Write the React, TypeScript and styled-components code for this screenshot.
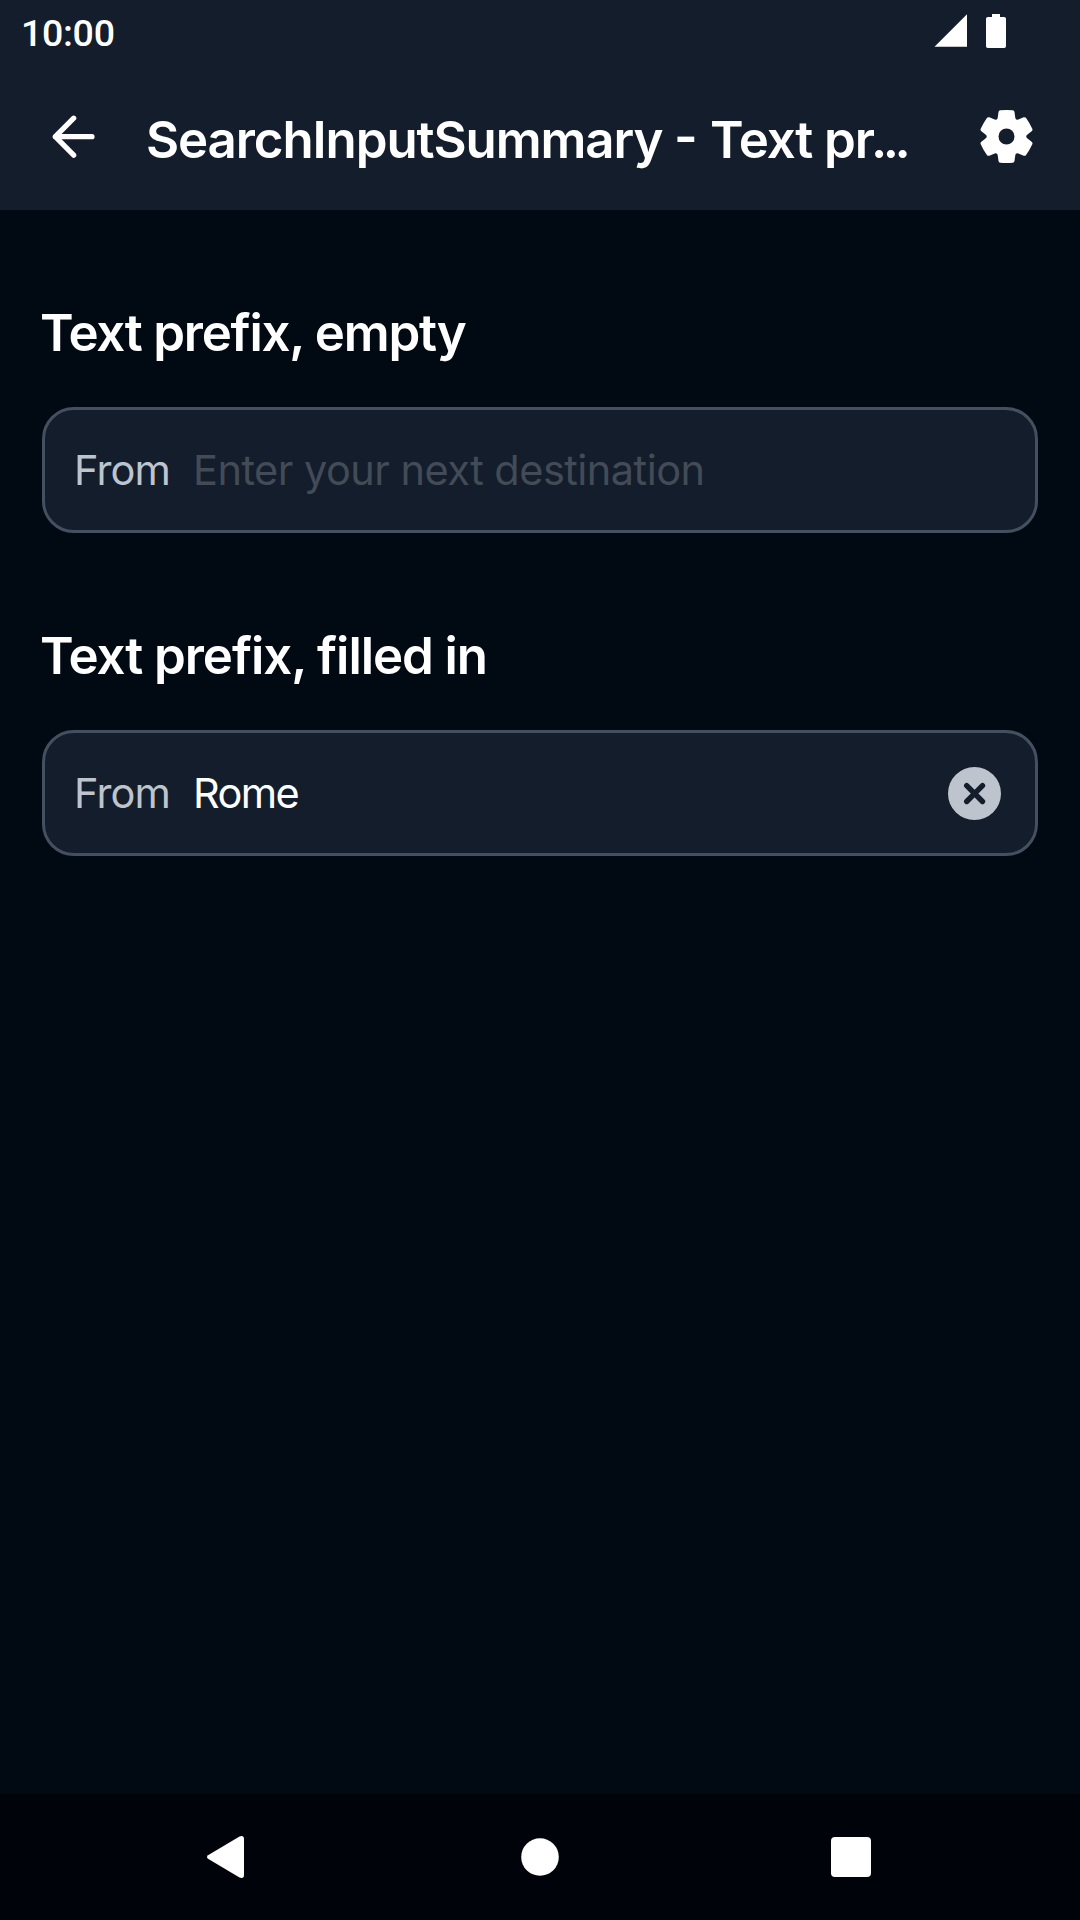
import React from 'react';
import styled, { createGlobalStyle } from 'styled-components';

const color = {
  canvas: '#010913',
  surface: '#141D2B',
  line: '#44505F',
  text: '#FFFFFF',
  secondary: '#BDC4CD',
  disabled: '#424B56',
  nav: '#01030A',
};

const GlobalStyle = createGlobalStyle`
  * { box-sizing: border-box; }
  body { margin: 0; background: ${color.canvas}; }
`;

const Screen = styled.div`
  width: 1080px;
  height: 1920px;
  display: flex;
  flex-direction: column;
  overflow: hidden;
  background: ${color.canvas};
  color: ${color.text};
  font-family: Inter, 'Liberation Sans', sans-serif;
`;

const StatusBar = styled.div`
  height: 63px;
  flex: none;
  display: flex;
  justify-content: space-between;
  align-items: flex-start;
  padding: 0 74px 0 21px;
  background: ${color.surface};
`;

const Clock = styled.time`
  padding-top: 11px;
  font: 500 37.5px/44px Roboto, sans-serif;
  letter-spacing: -0.3px;
`;

const StatusIcons = styled.div`
  display: flex;
  gap: 19px;
  padding-top: 14px;
`;

const AppBar = styled.header`
  height: 147px;
  flex: none;
  display: flex;
  align-items: center;
  padding: 0 46px 0 52px;
  background: ${color.surface};
`;

const IconButton = styled.button`
  display: flex;
  flex: none;
  padding: 0;
  border: 0;
  background: none;
  color: inherit;
`;

const Title = styled.h1`
  flex: 1;
  margin: 0;
  padding: 6px 0 0 50px;
  font-size: 51px;
  line-height: 64px;
  font-weight: 600;
  letter-spacing: -1.1px;
  white-space: nowrap;
`;

const Dash = styled.span`
  font-feature-settings: 'case';
  letter-spacing: 0.5px;
`;

const Dots = styled.span`
  letter-spacing: -4.4px;
  margin-left: -3px;
`;

const Content = styled.main`
  flex: 1;
  padding: 91px 42px 0;
`;

const Section = styled.section`
  height: 323px;
`;

const Heading = styled.h2<{ $spacing: number }>`
  margin: 0 0 42px -2px;
  font-size: 51px;
  line-height: 64px;
  font-weight: 600;
  letter-spacing: ${(p) => p.$spacing}px;
  white-space: nowrap;
`;

const SearchBox = styled.div`
  height: 126px;
  display: flex;
  align-items: center;
  padding: 0 34px 0 29px;
  border: 3px solid ${color.line};
  border-radius: 32px;
  background: ${color.surface};
  font-size: 41.5px;
  line-height: 56px;
  white-space: nowrap;
`;

const Prefix = styled.span`
  width: 119px;
  color: ${color.secondary};
  letter-spacing: -0.9px;
`;

const Value = styled.span<{ $empty?: boolean }>`
  flex: 1;
  color: ${(p) => (p.$empty ? color.disabled : color.text)};
  letter-spacing: ${(p) => (p.$empty ? -0.53 : -1.6)}px;
`;

const NavBar = styled.nav`
  height: 126px;
  flex: none;
  display: grid;
  grid-template-columns: 315px 310px 40px;
  align-items: center;
  padding-left: 206px;
  background: ${color.nav};
`;

const TOOTH =
  'Q-8.72 -17.7 -8.6 -20 L-8 -24.4 Q-7.8 -26 -6.2 -26.2 Q0 -26.8 6.2 -26.2 Q7.8 -26 8 -24.4 L8.6 -20 Q8.72 -17.7 9.85 -17.06';

// Rotates one tooth outline around the hub to form the whole gear.
function gearPath() {
  let d = 'M-9.85 -17.06';
  for (let i = 0; i < 6; i++) {
    const a = (i * Math.PI) / 3;
    d += TOOTH.replace(/(-?[\d.]+) (-?[\d.]+)/g, (_, xs, ys) => {
      const x = Number(xs);
      const y = Number(ys);
      return `${(x * Math.cos(a) - y * Math.sin(a)).toFixed(2)} ${(x * Math.sin(a) + y * Math.cos(a)).toFixed(2)}`;
    });
  }
  return d + 'Z M8 0 A8 8 0 1 0 -8 0 A8 8 0 1 0 8 0Z';
}

const SignalIcon = () => (
  <svg width="33" height="33" viewBox="0 0 33 33">
    <path d="M0.5 32.8H33V0.3Z" fill="#fff" />
  </svg>
);

const BatteryIcon = () => (
  <svg width="20" height="34" viewBox="0 0 20 34">
    <path d="M6 0h8v3h4.2q1.8 0 1.8 1.8v27.4q0 1.8-1.8 1.8H1.8Q0 34 0 32.2V4.8Q0 3 1.8 3H6Z" fill="#fff" />
  </svg>
);

const BackIcon = () => (
  <svg width="44" height="44" viewBox="0 0 44 44" fill="none" stroke="#fff" strokeWidth="5.2" strokeLinecap="round" strokeLinejoin="round">
    <path d="M40 21.7H3.3M21.7 3.2L3.3 21.7L21.7 40.2" />
  </svg>
);

const SettingsIcon = () => (
  <svg width="54" height="54" viewBox="-26.5 -26.5 54 54">
    <path d={gearPath()} fill="#fff" fillRule="evenodd" />
  </svg>
);

const ClearIcon = () => (
  <svg width="53" height="53" viewBox="0 0 53 53">
    <circle cx="26.5" cy="26.5" r="26.5" fill={color.secondary} />
    <path d="M18.7 18.7l15.8 15.8M34.5 18.7L18.7 34.5" stroke={color.surface} strokeWidth="5.4" strokeLinecap="round" />
  </svg>
);

const NavBackIcon = () => (
  <svg width="38" height="44" viewBox="0 0 38 44">
    <path d="M2 20.2L33.5 1.5Q38 0 38 4V40Q38 44 33.5 42.5L2 23.8Q0 22 2 20.2Z" fill="#fff" />
  </svg>
);

const NavHomeIcon = () => (
  <svg width="38" height="38" viewBox="0 0 38 38">
    <circle cx="19" cy="19" r="18.8" fill="#fff" />
  </svg>
);

const NavRecentIcon = () => (
  <svg width="40" height="40" viewBox="0 0 40 40">
    <rect width="40" height="40" rx="4" fill="#fff" />
  </svg>
);

export default function App() {
  return (
    <Screen>
      <GlobalStyle />
      <StatusBar>
        <Clock>10:00</Clock>
        <StatusIcons>
          <SignalIcon />
          <BatteryIcon />
        </StatusIcons>
      </StatusBar>
      <AppBar>
        <IconButton aria-label="Back">
          <BackIcon />
        </IconButton>
        <Title>
          SearchInputSummary <Dash>-</Dash> Text pr<Dots>...</Dots>
        </Title>
        <IconButton aria-label="Settings">
          <SettingsIcon />
        </IconButton>
      </AppBar>
      <Content>
        <Section>
          <Heading $spacing={-1.25}>Text prefix, empty</Heading>
          <SearchBox>
            <Prefix>From</Prefix>
            <Value $empty>Enter your next destination</Value>
          </SearchBox>
        </Section>
        <Section>
          <Heading $spacing={-1.08}>Text prefix, filled in</Heading>
          <SearchBox>
            <Prefix>From</Prefix>
            <Value>Rome</Value>
            <IconButton aria-label="Clear">
              <ClearIcon />
            </IconButton>
          </SearchBox>
        </Section>
      </Content>
      <NavBar>
        <NavBackIcon />
        <NavHomeIcon />
        <NavRecentIcon />
      </NavBar>
    </Screen>
  );
}
